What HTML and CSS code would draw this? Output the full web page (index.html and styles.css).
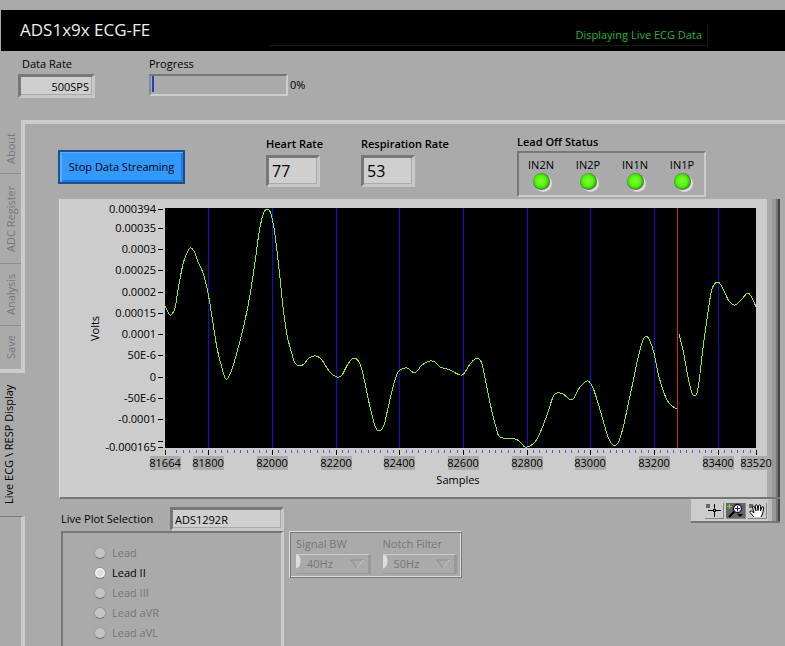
FILE: index.html
```
<!DOCTYPE html>
<html lang="en">

<head>
    <meta charset="utf-8">
    <title>ADS1x9x ECG-FE</title>
    <link rel="stylesheet" href="styles.css">
</head>

<body>
    <header class="titleBar">
        <h1>ADS1x9x ECG-FE</h1>
        <div class="status">Displaying Live ECG Data</div>
    </header>

    <div class="topRow">
        <div class="dataRate">
            <label for="dataRate">Data Rate</label>
            <input id="dataRate" class="field" type="text" value="500SPS" readonly>
        </div>
        <div class="progress">
            <span id="progressLabel">Progress</span>
            <div class="progressLine">
                <div class="progressBar" role="progressbar" aria-labelledby="progressLabel" aria-valuenow="0"><div class="progressFill"></div></div>
                <span>0%</span>
            </div>
        </div>
    </div>

    <div class="workspace">
        <nav class="tabs" role="tablist">
            <div class="tabGroup">
                <button class="tab tabAbout" role="tab">About</button>
                <button class="tab tabRegister" role="tab">ADC Register</button>
                <button class="tab tabAnalysis" role="tab">Analysis</button>
                <button class="tab tabSave" role="tab">Save</button>
            </div>
            <button class="tab tabLive" role="tab" aria-selected="true">Live ECG \ RESP Display</button>
            <div class="tabRest"></div>
        </nav>

        <main class="page">
            <div class="controls">
                <button class="streamButton">Stop Data Streaming</button>
                <div class="rate heartRate">
                    <label for="heartRate">Heart Rate</label>
                    <input id="heartRate" class="field" type="text" value="77" readonly>
                </div>
                <div class="rate respRate">
                    <label for="respRate">Respiration Rate</label>
                    <input id="respRate" class="field" type="text" value="53" readonly>
                </div>
                <div class="leadOff">
                    <span class="leadOffTitle">Lead Off Status</span>
                    <div class="leds">
                        <div class="led">IN2N<i></i></div>
                        <div class="led">IN2P<i></i></div>
                        <div class="led">IN1N<i></i></div>
                        <div class="led">IN1P<i></i></div>
                    </div>
                </div>
            </div>

            <section class="chart">
                <div class="chartBody">
                    <div class="yTitle">Volts</div>
                    <svg class="plot" id="plot">
                        <rect class="plotArea" width="100%" height="100%" />
                        <g id="grid"></g>
                        <svg width="100%" height="100%" viewBox="0 0 591 240" preserveAspectRatio="none">
                            <path id="oldTrace" class="trace" />
                            <path id="newTrace" class="trace" />
                        </svg>
                        <g id="axes"></g>
                    </svg>
                </div>
                <div class="xTitle">Samples</div>
            </section>

            <div class="lower">
                <div class="plotSelection">
                    <div class="selectionLine">
                        <label for="device">Live Plot Selection</label>
                        <input id="device" class="field" type="text" value="ADS1292R" readonly>
                    </div>
                    <div class="leads">
                        <label class="off"><input type="radio" name="lead" disabled>Lead</label>
                        <label><input type="radio" name="lead" checked>Lead II</label>
                        <label class="off"><input type="radio" name="lead" disabled>Lead III</label>
                        <label class="off"><input type="radio" name="lead" disabled>Lead aVR</label>
                        <label class="off"><input type="radio" name="lead" disabled>Lead aVL</label>
                    </div>
                </div>

                <div class="filters">
                    <div class="filter">
                        <label for="signalBw">Signal BW</label>
                        <div class="picker">
                            <select id="signalBw" disabled><option>40Hz</option></select>
                            <svg width="14" height="10" viewBox="0 0 14 10"><path d="M1 1H13L7 9Z" fill="none" stroke="#8c8c8c" /><path d="M13 1L7 9" stroke="#ccc" /></svg>
                        </div>
                    </div>
                    <div class="filter">
                        <label for="notch">Notch Filter</label>
                        <div class="picker">
                            <select id="notch" disabled><option>50Hz</option></select>
                            <svg width="14" height="10" viewBox="0 0 14 10"><path d="M1 1H13L7 9Z" fill="none" stroke="#8c8c8c" /><path d="M13 1L7 9" stroke="#ccc" /></svg>
                        </div>
                    </div>
                </div>

                <div class="palette">
                    <button class="tool" aria-label="Cursor">
                        <svg width="18" height="15" viewBox="0 0 18 15">
                            <rect x="1" y="1" width="4" height="4" fill="#666" />
                            <path d="M9.500 1V5.500M9.500 9V14M3 7.500H8M11 7.500H16" stroke="#000" fill="none" />
                            <rect x="8.500" y="6.500" width="2" height="2" fill="none" stroke="#000" />
                        </svg>
                    </button>
                    <button class="tool active" aria-label="Zoom">
                        <svg width="18" height="15" viewBox="0 0 18 15">
                            <path d="M1 3.500H6M3.500 1V6" stroke="#7be02a" />
                            <path d="M8.500 8.500L3 14" stroke="#000" stroke-width="2" />
                            <circle cx="11.500" cy="5.500" r="4" fill="#fff" stroke="#112" stroke-width="1.300" />
                            <path d="M9 5.500H14M11.500 3V8" stroke="#22a" />
                            <path d="M11 11H17L14 14Z" fill="#000" />
                        </svg>
                    </button>
                    <button class="tool" aria-label="Pan">
                        <svg width="18" height="15" viewBox="0 0 18 15">
                            <rect x="1" y="1" width="4" height="4" fill="#666" />
                            <path d="M6 14L2 9.500Q1.500 7.500 3.500 8L6 10L4.500 4Q5 2.500 6.200 3.500L8 8L7.200 2.500Q8 1 9.200 2.300L10 7.500L10.700 2.500Q12 1.200 12.700 2.700L12.500 8L14 4Q15.500 3.200 15.700 5L14.500 11L13 14" fill="#fff" stroke="#000" />
                        </svg>
                    </button>
                </div>
            </div>
        </main>
    </div>
    <script src="chart.js"></script>
</body>

</html>
```

FILE: styles.css
```
* {
    box-sizing: border-box;
}
body {
    display: flex;
    flex-direction: column;
    min-height: 100vh;
    margin: 0;
    padding-top: 10px;
    background-color: #aaa;
    color: #000;
    font-family: "Open Sans", "Noto Sans", sans-serif;
    font-size: 11px;
    line-height: 16px;
}
button, input, select {
    font: inherit;
    color: inherit;
}
.titleBar {
    display: flex;
    justify-content: space-between;
    height: 41px;
    margin-left: 1px;
    padding-left: 19px;
    background-color: #000;
}
.titleBar h1 {
    margin: 0;
    color: #eee;
    font-size: 17px;
    font-weight: normal;
    line-height: 40px;
    white-space: nowrap;
}
.status {
    width: 438px;
    height: 22px;
    margin: 14px 77px 0 0;
    padding-right: 5px;
    border: solid #161616;
    border-width: 0 1px 1px 0;
    color: #2bb52b;
    line-height: 22px;
    text-align: right;
}
.topRow {
    display: flex;
    gap: 54px;
    height: 69px;
    padding: 5px 18px 0;
}
.dataRate label,
.progress > span {
    display: block;
    height: 18px;
}
.dataRate {
    width: 77px;
}
.dataRate label {
    padding-left: 4px;
}
.field {
    display: block;
    width: 100%;
    height: 24px;
    padding: 0 3px;
    border: 3px solid;
    border-color: #777 #c8c8c8 #c8c8c8 #777;
    border-radius: 0;
    background-color: #cfcfcf;
    box-shadow: inset -1px -1px #aaa;
    outline: none;
}
.dataRate .field {
    text-align: right;
}
.progressLine {
    display: flex;
    align-items: center;
    gap: 2px;
}
.progressBar {
    width: 139px;
    height: 22px;
    padding: 0 1px;
    border: 2px solid;
    border-color: #777 #ccc #ccc #888;
}
.progressFill {
    width: 2px;
    height: 16px;
    background-color: #1a3fd0;
}

.workspace {
    display: flex;
    flex: 1;
}
.tabs {
    display: flex;
    flex-direction: column;
    width: 25px;
}
.tabGroup {
    display: flex;
    flex-direction: column;
    padding-top: 4px;
    border: solid #ccc;
    border-width: 0 4px 4px 0;
}
.tab {
    padding: 0;
    border: none;
    background: none;
    line-height: 20px;
    writing-mode: vertical-rl;
    transform: rotate(180deg);
}
.tabGroup .tab {
    border-top: 1px solid #8c8c8c;
    color: #77777d;
}
.tabAbout {
    height: 50px;
}
.tabRegister {
    height: 90px;
}
.tabAnalysis {
    height: 62px;
}
.tabGroup .tabSave {
    height: 43px;
    border-top: none;
}
.tabLive {
    height: 143px;
    width: 18px;
    line-height: 18px;
}
.tabRest {
    flex: 1;
    border-top: 1px solid #777;
    border-right: 4px solid #ccc;
}

.page {
    display: flex;
    flex: 1;
    flex-direction: column;
    min-width: 0;
    border-top: 4px solid #ccc;
}
.controls {
    display: flex;
    height: 75px;
    padding: 10px 0 0 33px;
}
.streamButton {
    width: 127px;
    height: 34px;
    margin: 16px 81px 0 0;
    padding: 0;
    border: 2px solid #1b4f8f;
    background-color: #3399ff;
    box-shadow: inset 2px 1px #5aacff, inset -2px -2px #1f7ae0;
    white-space: nowrap;
}
.rate label,
.leadOffTitle {
    display: block;
    height: 19px;
    font-weight: 600;
    white-space: nowrap;
}
.rate {
    width: 95px;
    padding-top: 2px;
}
.respRate {
    width: 156px;
}
.rate .field {
    width: 54px;
    height: 32px;
    font-size: 16px;
}
.leadOffTitle {
    height: 17px;
}
.leds {
    display: flex;
    gap: 19px;
    height: 46px;
    padding: 4px 8px;
    border: 2px solid;
    border-color: #777 #ccc #ccc #777;
}
.led {
    display: flex;
    flex-direction: column;
    align-items: center;
    width: 28px;
}
.led i {
    width: 17px;
    height: 17px;
    border-radius: 50%;
    background-image: radial-gradient(circle at 8px 8px, #7dff2e 0, #55f80c 5px, #3fd60a 7px, #4a8a3a 8px, #4a8a3a 9px);
    box-shadow: 2px 2px 0 #ddd;
}

.chart {
    height: 300px;
    margin: 0 5px 0 34px;
    padding: 9px 11px 0 0;
    border-bottom: 2px solid #777;
    border-left: 1px solid #ddd;
    background: linear-gradient(to left, #444 0 2px, #777 2px 4px, #999 4px 8px, #aaa 8px 13px, #ccc 13px);
}
.chartBody {
    display: flex;
    height: 240px;
    padding-right: 13px;
}
.yTitle {
    width: 105px;
    padding: 0 27px 0 62px;
    line-height: 16px;
    text-align: center;
    writing-mode: vertical-rl;
    transform: rotate(180deg);
}
.plot {
    flex: 1;
    min-width: 0;
    height: 240px;
    overflow: visible;
}
.plotArea {
    fill: #000;
}
.trace {
    fill: none;
    stroke: #86ee32;
    shape-rendering: crispEdges;
    vector-effect: non-scaling-stroke;
}
.gridLine {
    fill: #1010cc;
}
.cursorLine {
    fill: #d8281c;
}
.mark {
    overflow: visible;
}
.mark text {
    text-anchor: middle;
}
.mark rect {
    fill: #aaa;
}
.majorTick {
    stroke: #000;
    shape-rendering: crispEdges;
}
.minorTick {
    fill: #5555dd;
}
.yLabel {
    text-anchor: end;
}
.xTitle {
    padding: 24px 0 0 87px;
    text-align: center;
}

.lower {
    display: flex;
    flex: 1;
    align-items: flex-start;
    padding: 0 5px 0 36px;
}
.plotSelection {
    display: flex;
    flex-direction: column;
    align-self: stretch;
    width: 223px;
    padding-top: 8px;
}
.selectionLine {
    display: flex;
    align-items: center;
    justify-content: space-between;
    white-space: nowrap;
}
.selectionLine .field {
    width: 114px;
    padding: 0 2px;
}
.leads {
    flex: 1;
    padding: 10px 0 0 31px;
    border: solid;
    border-width: 2px 3px 0 2px;
    border-color: #777 #ccc #ccc #777;
}
.leads label {
    display: flex;
    align-items: center;
    gap: 6px;
    height: 20px;
}
.leads input {
    appearance: none;
    width: 12px;
    height: 12px;
    margin: 0;
    border: 1px solid #999;
    border-bottom-color: #777;
    border-radius: 50%;
    background-color: #c4c4c4;
}
.leads input:checked {
    background-image: radial-gradient(circle, #ddd 0 3px, #f4f4f4 4px);
}
.off, .filters {
    color: #75757d;
}
.filters {
    display: flex;
    gap: 12px;
    width: 173px;
    height: 47px;
    margin: 32px 0 0 5px;
    padding: 4px 4px 0 6px;
    border: 1px solid #ddd;
    border-right-color: #777;
    border-bottom-color: #777;
    box-shadow: inset 1px 1px #777, inset -1px -1px #ddd;
}
.filter {
    flex: 1;
}
.filter label {
    display: block;
    height: 18px;
    white-space: nowrap;
}
.picker {
    display: flex;
    align-items: center;
    height: 20px;
    padding-right: 4px;
    border: solid #999;
    border-width: 1px 3px 1px 0;
    border-top-color: #ccc;
    background: radial-gradient(ellipse 5px 8px at 0 6px, #ddd 80%, #aaa 100%);
}
.picker select {
    flex: 1;
    min-width: 0;
    padding: 0 0 0 11px;
    border: none;
    background: none;
    appearance: none;
    opacity: 1;
}
.palette {
    display: flex;
    gap: 2px;
    width: 89px;
    height: 24px;
    margin-left: auto;
    padding: 4px 13px 4px 14px;
    border-bottom: 2px solid #777;
    background: linear-gradient(to left, #444 0 2px, #777 2px 4px, #999 4px 8px, #bbb 8px 12px, #ccc 12px);
}
.tool {
    display: flex;
    width: 20px;
    height: 16px;
    padding: 0;
    border: solid #888;
    border-width: 0 1px 1px 0;
    background-color: #ccc;
}
.tool.active {
    background-color: #666;
}
```

FILE: chart.js
```
const firstSample = 81664;
const lastSample = 83520;
const yTicks = [
    ['0.000394', 1], ['0.00035', 20], ['0.0003', 41], ['0.00025', 62],
    ['0.0002', 84], ['0.00015', 105], ['0.0001', 126], ['50E-6', 147],
    ['0', 169], ['-50E-6', 190], ['-0.0001', 211], ['', 233], ['-0.000165', 239]
];
// trace right of the cursor is the previous sweep
const newSweep = [
    0,98, 2,102, 5,107, 7,106, 10,100, 13,82, 18,56, 22,45, 25,40, 29,43, 33,54, 38,65, 43,85, 48,115, 52,140, 57,160, 61,171,
    66,164, 72,144, 79,117, 85,87, 90,54, 94,25, 98,7, 102,1, 106,6, 110,27, 115,70, 118,99, 122,127, 127,146, 130,155,
    135,158, 139,156, 144,150, 151,148, 157,152, 164,163, 172,169, 177,167, 183,156, 189,150, 195,156, 200,175, 205,199,
    210,218, 214,223, 219,217, 223,200, 228,179, 233,164, 240,160, 244,161, 249,165, 253,162, 257,157, 265,153, 270,154,
    275,159, 285,162, 297,167, 305,156, 312,150, 317,156, 322,180, 327,204, 331,219, 335,229, 350,231, 355,234, 360,239,
    365,238, 370,234, 375,225, 382,207, 388,189, 392,185, 398,186, 407,192, 413,182, 418,176, 423,173, 428,180, 433,195,
    438,212, 443,229, 448,237, 453,235, 458,220, 463,197, 468,174, 472,154, 477,135, 481,128, 485,133, 489,145, 493,165,
    498,182, 502,192, 507,198, 512,201
];
const oldSweep = [
    514,126, 518,142, 524,174, 527,185, 529,188, 532,185, 534,174, 538,140, 543,104, 547,81, 553,74, 558,81, 564,93,
    570,97, 577,91, 583,85, 588,92, 591,99
];

const plot = document.getElementById('plot');
const grid = document.getElementById('grid');
const axes = document.getElementById('axes');

function add(parent, name, attrs, text) {
    const el = document.createElementNS('http://www.w3.org/2000/svg', name);
    for (const key in attrs) el.setAttribute(key, attrs[key]);
    if (text) el.textContent = text;
    parent.appendChild(el);
    return el;
}

// whole pixels keep the one pixel lines sharp
function xOf(sample) {
    const width = plot.getBoundingClientRect().width;
    return Math.round((sample - firstSample) / (lastSample - firstSample) * width);
}

function smoothPath(p) {
    let d = `M${p[0]} ${p[1]}`;
    for (let i = 0; i < p.length - 2; i += 2) {
        const a = Math.max(i - 2, 0);
        const b = Math.min(i + 4, p.length - 2);
        d += `C${p[i] + (p[i + 2] - p[a]) / 6} ${p[i + 1] + (p[i + 3] - p[a + 1]) / 6} `
            + `${p[i + 2] - (p[b] - p[i]) / 6} ${p[i + 3] - (p[b + 1] - p[i + 1]) / 6} ${p[i + 2]} ${p[i + 3]}`;
    }
    return d;
}

function addMark(sample) {
    const mark = add(axes, 'svg', { class: 'mark', x: xOf(sample), y: 240 });
    add(mark, 'line', { class: 'majorTick', x1: 0.5, x2: 0.5, y1: 2, y2: 7 });
    add(mark, 'rect', { x: -15, y: 8, width: 31, height: 14 });
    add(mark, 'text', { y: 19 }, sample);
}

function draw() {
    grid.replaceChildren();
    axes.replaceChildren();

    for (let s = 81800; s < lastSample; s += 200) {
        add(grid, 'rect', { class: 'gridLine', x: xOf(s), width: 1, height: '100%' });
    }
    add(grid, 'rect', { class: 'cursorLine', x: xOf(83273), width: 1, height: '100%' });

    for (let s = 81700; s < lastSample; s += 20) {
        add(axes, 'rect', { class: 'minorTick', x: xOf(s), y: 242, width: 1, height: 3 });
    }
    addMark(firstSample);
    for (let s = 81800; s < lastSample; s += 200) addMark(s);
    addMark(lastSample);

    yTicks.forEach(([label, y]) => {
        add(axes, 'line', { class: 'majorTick', x1: -7, x2: -2, y1: y + 0.5, y2: y + 0.5 });
        add(axes, 'text', { class: 'yLabel', x: -9, y: y + 4 }, label);
    });
}

document.getElementById('newTrace').setAttribute('d', smoothPath(newSweep));
document.getElementById('oldTrace').setAttribute('d', smoothPath(oldSweep));
draw();
window.addEventListener('resize', draw);
```
